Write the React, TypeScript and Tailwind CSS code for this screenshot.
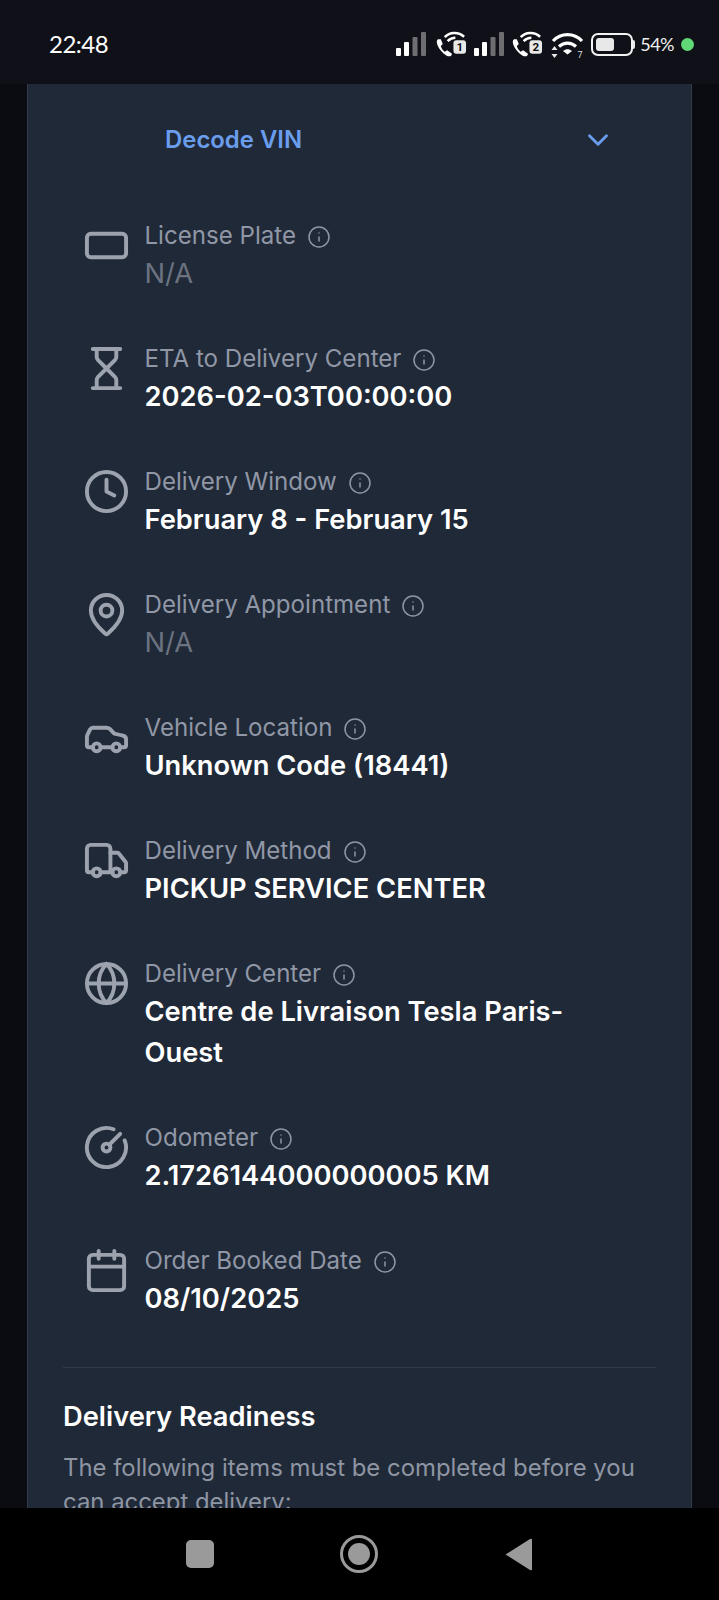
import React from "react";
import {
  RectangleHorizontal,
  Hourglass,
  Clock,
  MapPin,
  Car,
  Truck,
  Globe,
  CircleGauge,
  Calendar,
  Info,
  ChevronDown,
} from "lucide-react";

const rows = [
  { icon: RectangleHorizontal, label: "License Plate", value: "N/A", empty: true },
  { icon: Hourglass, label: "ETA to Delivery Center", value: "2026-02-03T00:00:00" },
  { icon: Clock, label: "Delivery Window", value: "February 8 - February 15" },
  { icon: MapPin, label: "Delivery Appointment", value: "N/A", empty: true },
  { icon: Car, label: "Vehicle Location", value: "Unknown Code (18441)" },
  { icon: Truck, label: "Delivery Method", value: "PICKUP SERVICE CENTER" },
  { icon: Globe, label: "Delivery Center", value: "Centre de Livraison Tesla Paris-Ouest" },
  { icon: CircleGauge, label: "Odometer", value: "2.1726144000000005 KM" },
  { icon: Calendar, label: "Order Booked Date", value: "08/10/2025" },
];

const Signal = () => (
  <svg width="30" height="24" viewBox="0 0 30 24" fill="#fff">
    <rect x="0" y="16" width="5" height="8" rx="1" />
    <rect x="8" y="10" width="5" height="14" rx="1" />
    <rect x="16.500" y="5" width="5" height="19" rx="1" fill="#6e6e72" />
    <rect x="25" y="0" width="5" height="24" rx="1" fill="#6e6e72" />
  </svg>
);

const VoWifi = ({ n }: { n: string }) => (
  <svg width="31" height="28" viewBox="0 0 32 28" fill="none">
    <path
      d="M2 9c-1.500 1-1.500 3-.5 6 1.500 4 5 8.500 9.500 11 2 1 4 1 5-.5l.5-1.500-5-3.500-2.500 1.500c-1.500-1-3.500-3.500-4-6l2-2-2-5z"
      fill="#fff"
    />
    <path d="M9 7c5-5.500 14-6 20-.5" stroke="#fff" strokeWidth="2.600" />
    <path d="M12 11c2.500-2.500 5-3.500 8-3.500" stroke="#fff" strokeWidth="2.600" />
    <rect x="18" y="10" width="13" height="14" rx="3" fill="#e8e8e8" />
    <text x="24.500" y="21.500" textAnchor="middle" fontSize="12" fontWeight="700" fill="#111" fontFamily="Roboto, sans-serif">
      {n}
    </text>
  </svg>
);

const Wifi = () => (
  <svg width="33" height="28" viewBox="0 0 33 28" fill="none">
    <path d="M2 11c8-8.500 21-8.500 29 0" stroke="#fff" strokeWidth="3.200" />
    <path d="M8 16.500c5-4.500 12-4.500 17 0" stroke="#fff" strokeWidth="3.200" />
    <path d="M12 21c3-2.500 6-2.500 9 0l-4.500 3.500z" fill="#fff" />
    <path d="M3.500 16l3 4h-6zM3.500 28l3-4h-6z" fill="#e8e8e8" />
    <text x="29" y="27.500" textAnchor="middle" fontSize="9" fill="#ddd" fontFamily="Roboto, sans-serif">
      7
    </text>
  </svg>
);

const Battery = () => (
  <div className="flex items-center">
    <div className="flex h-[23px] w-[42px] items-center rounded-[7px] border-2 border-[#f2f2f2] p-[3px]">
      <div className="h-full w-[18px] rounded-[3px] bg-[#e8e8e8]" />
    </div>
    <div className="h-[9px] w-[2px] rounded-r bg-[#e8e8e8]" />
  </div>
);

const StatusBar = () => (
  <div className="flex h-[84px] shrink-0 items-center justify-between bg-[#101118] pt-[4px] pl-[49px] pr-[25px] text-white">
    <span className="font-['Lato',sans-serif] text-[24px] leading-none tracking-[-0.5px]">22:48</span>
    <div className="flex items-center">
      <Signal />
      <div className="ml-[10px]"><VoWifi n="1" /></div>
      <div className="ml-[7px]"><Signal /></div>
      <div className="ml-[8px]"><VoWifi n="2" /></div>
      <div className="ml-[8px]"><Wifi /></div>
      <div className="ml-[7px]"><Battery /></div>
      <span className="ml-[5px] font-['Lato',sans-serif] text-[18px] leading-none tracking-[-0.5px] text-[#eee]">54%</span>
      <div className="ml-[7px] h-[13px] w-[13px] rounded-full bg-[#5fd875]" />
    </div>
  </div>
);

const DetailRow = ({ row }: { row: (typeof rows)[number] }) => {
  const Icon = row.icon;
  return (
    <div className="flex gap-[14.500px]">
      <Icon size={47} strokeWidth={2} className="mt-[4px] shrink-0 text-[#9ca3af]" />
      <div className="min-w-0 flex-1 pr-[30px]">
        <div className="flex h-[35px] items-center gap-[11px] pt-[2px] text-[24.100px] font-normal text-[#9097a6]">
          <span>{row.label}</span>
          <Info size={24} strokeWidth={1.500} className="text-[#8e95a3]" />
        </div>
        <div
          className={
            "text-[27.300px] leading-[41px] " +
            (row.empty ? "font-normal text-[#6b7280]" : "font-semibold text-white")
          }
        >
          {row.value}
        </div>
      </div>
    </div>
  );
};

const NavBar = () => (
  <div className="flex h-[92px] shrink-0 items-center justify-center bg-black pr-[2px]">
    <div className="h-[28px] w-[28px] rounded-[5px] bg-[#9a9a9a]" />
    <div className="ml-[126px] flex h-[38px] w-[38px] items-center justify-center rounded-full border-[3px] border-[#9a9a9a]">
      <div className="h-[22px] w-[22px] rounded-full bg-[#9a9a9a]" />
    </div>
    <svg className="ml-[127px]" width="27" height="33" viewBox="0 0 27 33">
      <path d="M0.500 16.500 L25 1 Q27 0 27 2 L27 31 Q27 33 25 32 Z" fill="#9a9a9a" />
    </svg>
  </div>
);

export default function App() {
  return (
    <div className="flex h-[1600px] w-[719px] flex-col overflow-hidden bg-[#0b0b12] font-['Inter',sans-serif]">
      <StatusBar />
      <div className="min-h-0 flex-1 overflow-hidden px-[27px]">
        <div className="border-x border-[#333b48] bg-[#202937] px-[35px] pt-[28px]">
          <div className="flex h-[56px] items-center justify-between pl-[102px] pr-[41px] text-[#6b9ded]">
            <span className="text-[23.900px] font-semibold">Decode VIN</span>
            <ChevronDown size={34} strokeWidth={2} />
          </div>
          <div className="mt-[50px] flex flex-col gap-[47px] pl-[20px]">
            {rows.map((row) => (
              <DetailRow key={row.label} row={row} />
            ))}
          </div>
          <div className="mt-[47.500px] border-t border-[#323b49] pt-[31px]">
            <h3 className="text-[27.300px] leading-[36px] font-semibold text-white">Delivery Readiness</h3>
            <p className="mt-[16px] text-[23.900px] leading-[34px] text-[#8e95a3]">
              The following items must be completed before you can accept delivery:
            </p>
          </div>
        </div>
      </div>
      <NavBar />
    </div>
  );
}
